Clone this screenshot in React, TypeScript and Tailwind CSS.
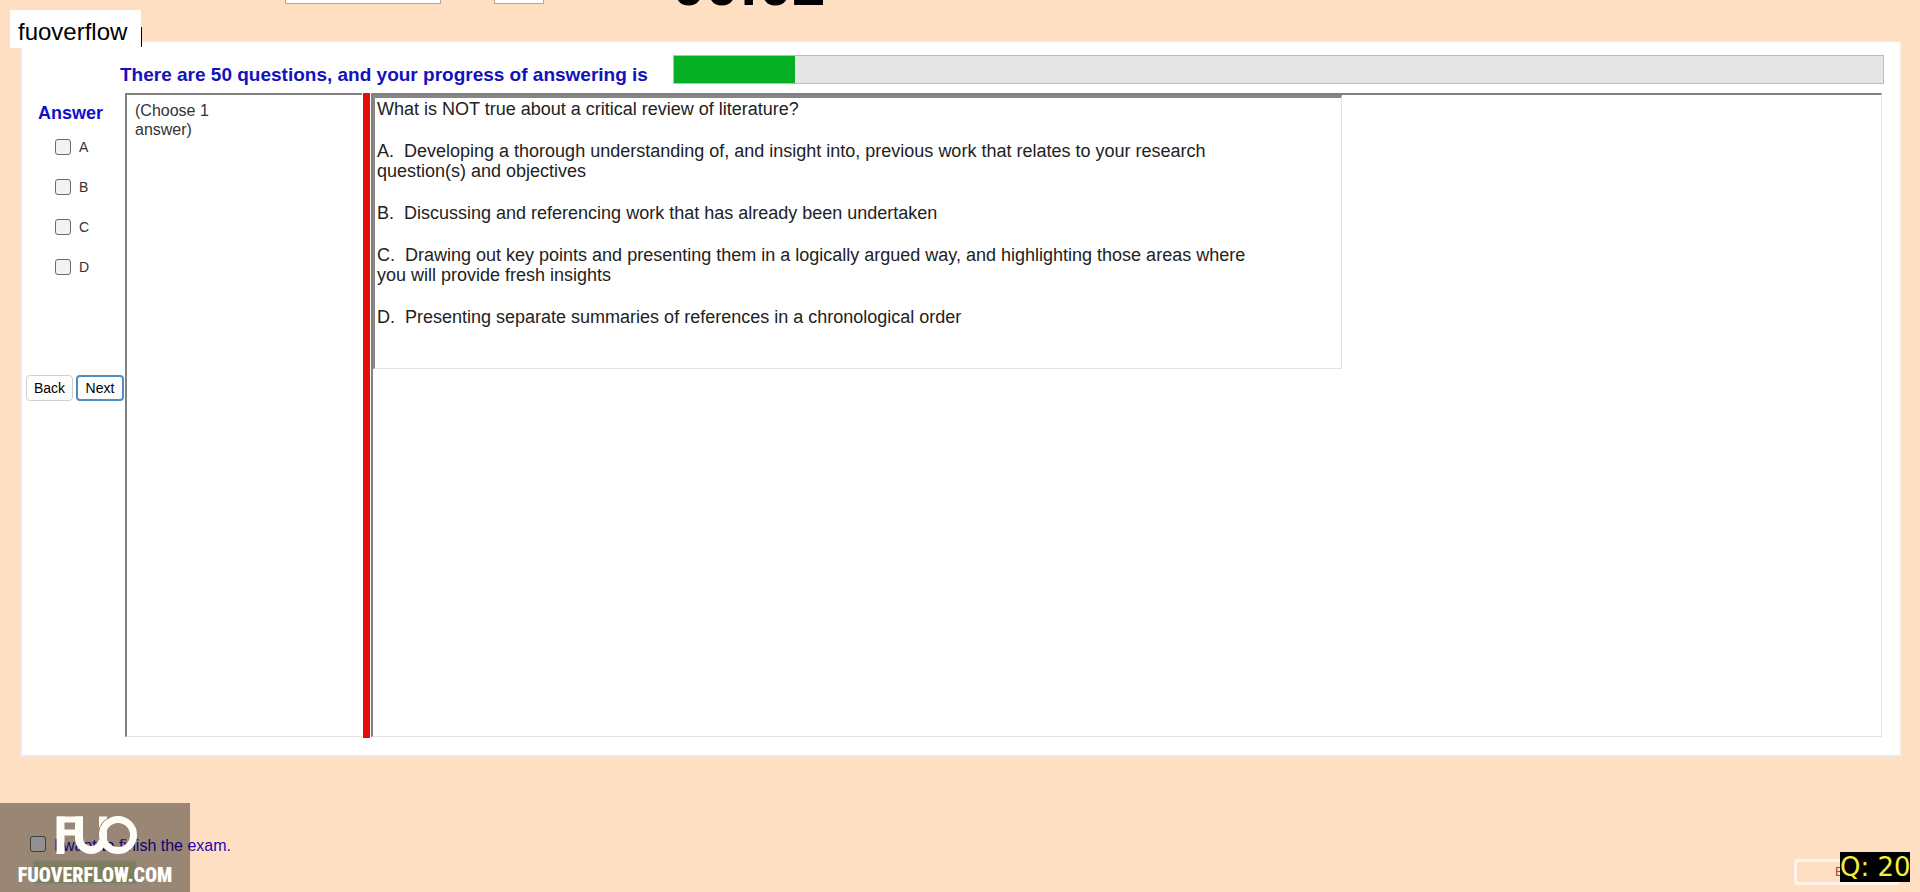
import { useState } from 'react';

const TOTAL_QUESTIONS = 50;
const ANSWERED = 5;
const CHOICES = ['A', 'B', 'C', 'D'];

const OPTIONS = [
  'A.  Developing a thorough understanding of, and insight into, previous work that relates to your research question(s) and objectives',
  'B.  Discussing and referencing work that has already been undertaken',
  'C.  Drawing out key points and presenting them in a logically argued way, and highlighting those areas where you will provide fresh insights',
  'D.  Presenting separate summaries of references in a chronological order',
];

interface TickBoxProps {
  id: string;
  label: string;
  labelClass: string;
  checked: boolean;
  onChange: (checked: boolean) => void;
}

function TickBox({ id, label, labelClass, checked, onChange }: TickBoxProps) {
  return (
    <div className="flex items-center gap-2">
      <input
        id={id}
        type="checkbox"
        checked={checked}
        onChange={(e) => onChange(e.target.checked)}
        className="w-4 h-4 appearance-none rounded-[3px] border border-[#6b6b6b] bg-[#f2f2f2] checked:bg-blue-600"
      />
      <label htmlFor={id} className={labelClass}>
        {label}
      </label>
    </div>
  );
}

function TopBar() {
  return (
    <header className="flex h-[41px] items-end pl-[285px] pb-[26px]">
      <select
        aria-label="Font"
        className="mb-[11px] h-6 w-[156px] shrink-0 border border-[#a9a9a9] bg-white text-sm"
      />
      <select
        aria-label="Size"
        className="ml-[53px] mb-[11px] h-6 w-[50px] shrink-0 border border-[#a9a9a9] bg-white text-sm"
      />
      <div className="ml-32 text-6xl leading-none font-bold">00:02</div>
    </header>
  );
}

function ProgressRow() {
  const percent = (ANSWERED / TOTAL_QUESTIONS) * 100;

  return (
    <div className="flex h-[51px] items-start pt-[13px] pr-4 pl-[98px]">
      <p id="progress-label" className="w-[553px] shrink-0 pt-[10px] text-[19px] leading-5 font-bold text-[#1212bc]">
        There are 50 questions, and your progress of answering is
      </p>
      <div
        role="progressbar"
        aria-labelledby="progress-label"
        aria-valuenow={percent}
        className="h-[29px] flex-1 border border-[#bcbcbc] bg-[#e6e6e6]"
      >
        <div className="h-full bg-[#06b025]" style={{ width: `${percent}%` }} />
      </div>
    </div>
  );
}

function AnswerColumn() {
  const [picked, setPicked] = useState<string[]>([]);

  const toggle = (choice: string, checked: boolean) => {
    setPicked(checked ? [...picked, choice] : picked.filter((c) => c !== choice));
  };

  return (
    <div className="w-[103px] shrink-0 pt-[10px]">
      <h2 className="pl-4 text-lg leading-5 font-bold text-[#1010cc]">Answer</h2>
      <div className="flex flex-col gap-6 pt-4 pl-[33px]">
        {CHOICES.map((choice) => (
          <TickBox
            key={choice}
            id={`choice-${choice}`}
            label={choice}
            labelClass="text-[14px] leading-4 text-[#333]"
            checked={picked.includes(choice)}
            onChange={(checked) => toggle(choice, checked)}
          />
        ))}
      </div>
      <div className="flex gap-[3px] pt-[100px] pl-1">
        <button className="h-[26px] w-[47px] rounded border border-[#cfcfcf] bg-[#fdfdfd] text-[14px]">Back</button>
        <button className="h-[26px] w-[48px] rounded border-2 border-[#4a8fc4] bg-[#fdfdfd] text-[14px]">Next</button>
      </div>
    </div>
  );
}

function QuestionPane() {
  return (
    <section className="mb-px flex-1 border-t-2 border-l-2 border-r border-b border-t-[#808080] border-l-[#808080] border-r-[#e3e3e3] border-b-[#e3e3e3]">
      <div className="flex h-[274px] w-[969px] flex-col gap-[22px] border-t-[3px] border-l-2 border-r border-b border-t-[#868686] border-l-[#868686] border-r-[#e3e3e3] border-b-[#e3e3e3] pt-px pr-20 pl-0.5 text-lg leading-5 text-[#222]">
        <p>What is NOT true about a critical review of literature?</p>
        {OPTIONS.map((option) => (
          <p key={option} className="whitespace-pre-wrap">
            {option}
          </p>
        ))}
      </div>
    </section>
  );
}

function Logo() {
  return (
    <svg width="84" height="40" viewBox="0 0 84 40" fill="none" stroke="#fffdf8" strokeWidth="8" aria-label="FUO">
      <path d="M7.500 39V1.500" />
      <path d="M4 4.500H30M8 17.500H24" strokeWidth="6" />
      <path d="M26 1.500V23A12 12 0 0 0 50 23V1.500" />
      <circle cx="65" cy="20" r="15.500" strokeWidth="7" />
      <path d="M46 25A19.500 19.500 0 0 1 55 3" stroke="#94836f" strokeWidth="1" />
    </svg>
  );
}

function Footer() {
  const [finish, setFinish] = useState(false);

  return (
    <footer className="relative flex h-[135px] items-start justify-between pt-[75px] pr-5 pl-[30px]">
      <div>
        <TickBox
          id="finish"
          label="I want to finish the exam."
          labelClass="pt-1 text-base leading-5 text-[#2408b8]"
          checked={finish}
          onChange={setFinish}
        />
        <button
          aria-label="Finish"
          className="mt-[3px] ml-0.5 block h-[26px] w-[106px] rounded border-2 border-[#e8e0d0] bg-[#d2d09a]"
        />
      </div>
      <button className="mt-[27px] h-[26px] w-[106px] rounded border-[3px] border-[#fff5ea] text-left pl-[38px] text-[13px] text-[#a0522d]">
        Exit
      </button>

      <div className="absolute bottom-0 left-0 flex h-[89px] w-[190px] flex-col items-center bg-black/40 pt-3">
        <Logo />
        <span className="pt-1.5 font-['Roboto_Condensed','Open_Sans_Condensed','Noto_Sans_Condensed',Roboto,sans-serif] text-xl leading-7 font-black text-white">
          FUOVERFLOW.COM
        </span>
      </div>
      <div className="absolute right-[10px] bottom-[10px] h-[30px] w-[70px] bg-black font-['DejaVu_Sans',sans-serif] text-[26px] leading-[30px] whitespace-pre text-[#f2ee3c]">
        Q: 20
      </div>
    </footer>
  );
}

export default function App() {
  return (
    <div className="relative flex min-h-screen flex-col overflow-hidden bg-[#ffdfc1] font-['Liberation_Sans',Arial,sans-serif] text-black">
      <TopBar />

      <main className="mr-[18px] ml-5 flex flex-1 flex-col border-2 border-t border-[#f0e8e2] bg-white">
        <ProgressRow />
        <div className="flex flex-1 pr-[18px] pb-[17px]">
          <AnswerColumn />
          <section className="mb-px w-[237px] shrink-0 border-t-2 border-l-2 border-b border-t-[#808080] border-l-[#808080] border-b-[#e3e3e3] pt-1.5 pl-2">
            <p className="w-24 text-base leading-[19px] text-[#333]">(Choose 1 answer)</p>
          </section>
          <div className="mx-px w-[7px] shrink-0 bg-[#e60c0c]" />
          <QuestionPane />
        </div>
      </main>

      <Footer />

      {/* watermark with its text caret */}
      <div className="absolute top-[10px] left-[10px] flex items-end">
        <div className="h-[38px] w-[131px] bg-white pt-1.5 pl-2 text-2xl leading-8">fuoverflow</div>
        <div className="mb-px h-5 w-px bg-black" />
      </div>
    </div>
  );
}
